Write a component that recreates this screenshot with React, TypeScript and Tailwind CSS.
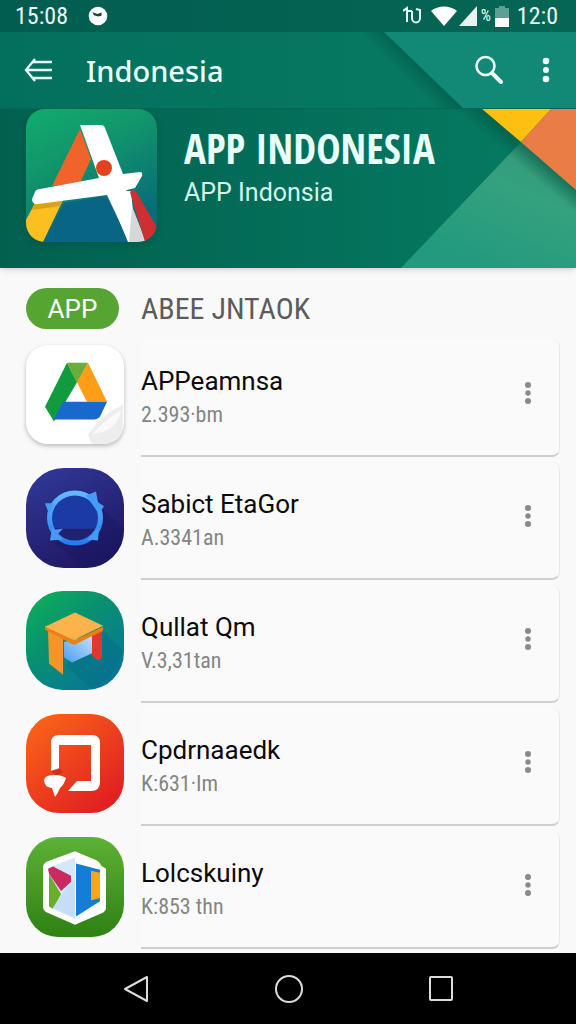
import type { ReactNode } from 'react';

type AppItem = {
  name: string;
  size: string;
  icon: ReactNode;
};

const apps: AppItem[] = [
  { name: 'APPeamnsa', size: '2.393·bm', icon: <DriveIcon /> },
  { name: 'Sabict EtaGor', size: 'A.3341an', icon: <RingIcon /> },
  { name: 'Qullat Qm', size: 'V.3,31tan', icon: <TableIcon /> },
  { name: 'Cpdrnaaedk', size: 'K:631·Im', icon: <FrameIcon /> },
  { name: 'Lolcskuiny', size: 'K:853 thn', icon: <CubeIcon /> },
];

export default function App() {
  return (
    <div className="flex min-h-screen flex-col bg-[#f9f9f9] font-['Roboto',sans-serif]">
      <header className="relative z-10 shadow-md">
        <StatusBar />
        <Toolbar />
        <Banner />
      </header>

      <main className="flex-1 pr-4 pl-[26px] pt-5">
        {/* Section heading */}
        <div className="mb-[10px] flex items-center gap-[22px]">
          <button
            type="button"
            className="h-[41px] w-[93px] rounded-full bg-[#56a532] text-[26px] leading-none text-white"
          >
            APP
          </button>
          <h2 className="font-['Roboto_Condensed','Roboto',sans-serif] text-[30px] leading-none text-[#5c5c5c]">
            ABEE JNTAOK
          </h2>
        </div>

        {/* App list */}
        <ul className="flex flex-col gap-[5px]">
          {apps.map((app) => (
            <li key={app.name} className="flex h-[118px] gap-[18px]">
              <div className="w-[97px] shrink-0 pt-[6px]">{app.icon}</div>
              <div className="flex flex-1 items-start justify-between rounded-r-lg border-r border-b-2 border-r-[#e8e8e8] border-b-[#cfcfd1] bg-[#fafafa] pr-4">
                <div className="pt-6">
                  <h3 className="text-[26px] leading-9 text-[#0b0b0b]">{app.name}</h3>
                  <p className="font-['Roboto_Condensed','Roboto',sans-serif] text-[22px] leading-8 text-[#858585]">
                    {app.size}
                  </p>
                </div>
                <button type="button" aria-label="More options" className="mt-8 p-2">
                  <svg viewBox="0 0 14 28" className="h-7 w-[14px]" fill="#8a8a8a">
                    <circle cx="7" cy="6" r="3" />
                    <circle cx="7" cy="14" r="2.7" />
                    <circle cx="7" cy="22" r="3" />
                  </svg>
                </button>
              </div>
            </li>
          ))}
        </ul>
      </main>

      <NavBar />
    </div>
  );
}

function StatusBar() {
  return (
    <div className="flex h-8 items-center bg-gradient-to-r from-[#015d50] to-[#066655] pr-[18px] pl-[15px] font-['Roboto_Condensed','Roboto',sans-serif] text-[24px] leading-none text-[#e9fbf6]">
      <span>15:08</span>
      <svg viewBox="0 0 20 20" className="ml-5 size-5">
        <circle cx="10" cy="10" r="9.3" fill="#fff" />
        <path d="M4.5 6l3 1.2 2 .8 4-1.5v3.2l-3.5.8-4-1.3z" fill="#16453d" />
      </svg>
      <div className="ml-auto flex items-center">
        <svg viewBox="0 0 20 20" className="size-5" fill="none" stroke="#e9fbf6" strokeWidth="2">
          <path d="M0 5l4-3v14M4 5h5M9 5v7c0 6 8 6 8 0V4l-4-1" />
        </svg>
        <svg viewBox="0 0 26 20" className="ml-2 h-5 w-[26px]" fill="#fff">
          <path d="M0 5C7-1 19-1 26 5L13 20z" />
        </svg>
        <svg viewBox="0 0 18 20" className="ml-[2px] h-5 w-[18px]">
          <path d="M18 0v20H0z" fill="#e5f4f0" />
        </svg>
        <span className="ml-1 text-[16px]">%</span>
        <svg viewBox="0 0 14 21" className="ml-1 h-[21px] w-[14px]">
          <path d="M4 0h6v2h4v11H0V2h4z" fill="#5d9f92" />
          <path d="M0 12h14v9H0z" fill="#fff" />
        </svg>
        <span className="ml-2">12:0</span>
      </div>
    </div>
  );
}

function Toolbar() {
  return (
    <div className="relative flex h-[76px] items-center bg-gradient-to-r from-[#03705d] to-[#087b63] pr-4 pl-6">
      <svg viewBox="0 0 220 76" className="absolute top-0 right-0 h-[76px] w-[220px]">
        <defs>
          <linearGradient id="fold" gradientUnits="userSpaceOnUse" x1="54" y1="51" x2="67" y2="38">
            <stop offset="0" stopColor="#025f4e" stopOpacity="0" />
            <stop offset="1" stopColor="#025f4e" stopOpacity="0.8" />
          </linearGradient>
        </defs>
        <path d="M2 0h26l79 76H81z" fill="url(#fold)" />
        <path d="M28 0h192v76H107z" fill="#128877" />
      </svg>
      <button type="button" aria-label="Back" className="relative">
        <svg viewBox="0 0 30 26" className="h-[26px] w-[30px]" fill="none" stroke="#e6fff8" strokeWidth="2.3">
          <path d="M11 2L2 13l9 11M9 5h19M2 13h26M9 21h19" />
        </svg>
      </button>
      <h1 className="relative ml-8 font-['Noto_Sans',sans-serif] text-[29px] leading-none font-medium text-[#e9fff9]">
        Indonesia
      </h1>
      <button type="button" aria-label="Search" className="relative ml-auto">
        <svg viewBox="0 0 30 30" className="size-[30px]" fill="none" stroke="#effffc">
          <circle cx="11.5" cy="11" r="9" strokeWidth="2.6" />
          <path d="M18 18l9 9" strokeWidth="4" strokeLinecap="round" />
        </svg>
      </button>
      <button type="button" aria-label="Menu" className="relative ml-7 px-2">
        <svg viewBox="0 0 12 28" className="h-7 w-3" fill="#effffc">
          <circle cx="6" cy="5" r="3.3" />
          <circle cx="6" cy="14" r="3" />
          <circle cx="6" cy="23" r="3.3" />
        </svg>
      </button>
    </div>
  );
}

function Banner() {
  return (
    <div className="relative flex h-40 items-start gap-[27px] overflow-hidden border-t border-[#056652] bg-gradient-to-r from-[#02604f] to-[#067c63] pl-[26px]">
      <svg viewBox="0 0 220 160" className="absolute -top-px right-0 h-40 w-[220px]">
        <defs>
          <linearGradient id="leaf" x1="1" y1="0.2" x2="0.5" y2="1">
            <stop offset="0" stopColor="#35997a" />
            <stop offset="0.35" stopColor="#35a17e" />
            <stop offset="1" stopColor="#239a7e" />
          </linearGradient>
          <linearGradient id="crease" gradientUnits="userSpaceOnUse" x1="153" y1="48" x2="165" y2="34">
            <stop offset="0" stopColor="#025341" stopOpacity="0" />
            <stop offset="1" stopColor="#025341" stopOpacity="0.6" />
          </linearGradient>
        </defs>
        <path d="M165 34l55 48v78H45z" fill="url(#leaf)" />
        <path d="M97 0h28l95 82v24z" fill="url(#crease)" />
        <path d="M125 0h71l-31 34z" fill="#fdbf11" />
        <path d="M196 0h24v82l-55-48z" fill="#e97d45" />
      </svg>
      <BannerLogo />
      <div className="relative pt-3">
        <p className="font-['Open_Sans_Condensed','Roboto_Condensed','Roboto',sans-serif] text-[41px] leading-[54px] font-bold text-[#e8fffa]">
          APP INDONESIA
        </p>
        <p className="text-[25px] leading-9 text-[#d5f5ec]">APP Indonsia</p>
      </div>
    </div>
  );
}

function BannerLogo() {
  return (
    <svg viewBox="0 0 131 134" className="relative h-[134px] w-[131px] shrink-0 drop-shadow-md">
      <defs>
        <linearGradient id="logo-bg" x1="0" y1="0" x2="0.5" y2="1">
          <stop offset="0" stopColor="#10ad6c" />
          <stop offset="0.4" stopColor="#11966b" />
          <stop offset="1" stopColor="#086c78" />
        </linearGradient>
        <clipPath id="logo-clip">
          <rect width="131" height="133" rx="19" />
        </clipPath>
      </defs>
      <g clipPath="url(#logo-clip)">
        <rect width="131" height="133" fill="url(#logo-bg)" />
        <path d="M38 94l42-7 25 46H17z" fill="#086583" />
        <path d="M54 20l11 30-11 24-28 3z" fill="#f0642c" />
        <path d="M9 94l28-3-20 42H-8V126z" fill="#fbbf20" />
        <path d="M9 94l28-3-3 6-28 4z" fill="#dca11a" />
        <path d="M54 16h21q3 0 4 3l18 46 17-2q3 0 2 4l-7 12-8 2q-3 2 0 7l5 45h-3L81 86 12 95q-6 1-6-5l3-7q1-3 5-3l59-11z" fill="#fff" />
        <path d="M81 82l24 0 5 51h-8z" fill="#fff" />
        <path d="M106 97l14 36h-17z" fill="#d6d7d7" />
        <path d="M104 83c3-3 5-2 7 1l26 45-17 7z" fill="#cf2e32" />
        <circle cx="78" cy="59" r="8" fill="#e2431e" />
      </g>
    </svg>
  );
}

function DriveIcon() {
  return (
    <svg viewBox="0 0 98 102" preserveAspectRatio="none" className="h-[100px] w-[98px] drop-shadow-[0_2px_2px_rgba(0,0,0,0.25)]">
      <rect width="98" height="101" rx="22" fill="#fff" />
      <path d="M41 18l10 20-23 40-9-15z" fill="#119b3e" />
      <path d="M41 18h21L51 39z" fill="#69ad3b" />
      <path d="M62 18l19 40H61L51 38z" fill="#fe9d17" />
      <path d="M37 58h44l-6 13q-2 5-7 5H28z" fill="#1868cf" />
      <path d="M97 61Q74 72 62 92l4 9h10q21 0 21-21z" fill="#ededed" />
      <path d="M95 66Q80 76 66 91l14-3q13-7 15-22z" fill="#fafafa" />
    </svg>
  );
}

function RingIcon() {
  return (
    <svg viewBox="0 0 98 102" preserveAspectRatio="none" className="h-[100px] w-[98px]">
      <defs>
        <linearGradient id="ring-bg" x1="0" y1="0" x2="0.5" y2="1">
          <stop offset="0" stopColor="#303a99" />
          <stop offset="1" stopColor="#201866" />
        </linearGradient>
        <linearGradient id="ring-line" x1="0" y1="0" x2="0" y2="1">
          <stop offset="0" stopColor="#62b9fb" />
          <stop offset="1" stopColor="#247df0" />
        </linearGradient>
        <clipPath id="ring-clip">
          <rect width="98" height="102" rx="38" />
        </clipPath>
      </defs>
      <g clipPath="url(#ring-clip)">
        <rect width="98" height="102" fill="url(#ring-bg)" />
        <path d="M75 40l25 24v40H64L26 75z" fill="#17165e" opacity="0.4" />
      </g>
      <circle cx="49" cy="51" r="25" fill="#20226f" />
      <path d="M29 37q20-22 40 0 7 12 4 25H36l-9-1q-5-14 2-24z" fill="#1c3aa4" />
      <circle cx="49" cy="51" r="25.5" fill="none" stroke="url(#ring-line)" strokeWidth="5" />
      <g fill="#459bf6">
        <path d="M19 36h9l-5 11z" />
        <path d="M60 28l10-4 2 11 6 4-5 8z" />
        <path d="M24 74l2-13 11 12z" />
        <path d="M72 74l1-13-12 12z" />
        <path d="M28 63l9-1-6 6z" />
      </g>
    </svg>
  );
}

function TableIcon() {
  return (
    <svg viewBox="0 0 98 98" preserveAspectRatio="none" className="h-[100px] w-[98px]">
      <defs>
        <linearGradient id="table-bg" x1="0" y1="0" x2="0.8" y2="1">
          <stop offset="0" stopColor="#0db257" />
          <stop offset="0.45" stopColor="#099070" />
          <stop offset="1" stopColor="#06759a" />
        </linearGradient>
        <linearGradient id="glass" x1="0" y1="1" x2="1" y2="0">
          <stop offset="0" stopColor="#4b9df5" />
          <stop offset="1" stopColor="#c4e2fa" />
        </linearGradient>
      </defs>
      <rect width="98" height="97" rx="37" fill="url(#table-bg)" />
      <path d="M76 38l20 19q-4 28-31 38L39 73z" fill="#066f88" opacity="0.55" />
      <path d="M38 50l28-7v18L46 70l-8-5z" fill="url(#glass)" />
      <path d="M22 38l15 8v36L23 71z" fill="#f49527" />
      <path d="M66 43l10-6v28q-1 4-6 2l-4-4z" fill="#e0392c" />
      <path d="M19 34l30 14 28-13v4L48 53 19 38z" fill="#e98118" />
      <path d="M49 21l28 13-29 14-29-13z" fill="#fdb34c" />
    </svg>
  );
}

function FrameIcon() {
  return (
    <svg viewBox="0 0 98 100" preserveAspectRatio="none" className="h-[100px] w-[98px]">
      <defs>
        <linearGradient id="frame-bg" x1="0" y1="0" x2="0.8" y2="1">
          <stop offset="0" stopColor="#fc6918" />
          <stop offset="1" stopColor="#e01d22" />
        </linearGradient>
      </defs>
      <rect width="98" height="99" rx="33" fill="url(#frame-bg)" />
      <path d="M25 57V29q0-8 8-8h33q8 0 8 8v39q0 9-9 9H42l9-10h14V31H33v24z" fill="#fff" />
      <path d="M25 57l8-3 4 4-6 4z" fill="#b8291a" opacity="0.6" />
      <path d="M18 66q1-5 10-5 8 0 12 3-2 7-6 10-2 5-5 9l-3-9q-8-1-8-8z" fill="#fff" />
    </svg>
  );
}

function CubeIcon() {
  return (
    <svg viewBox="0 0 98 98" preserveAspectRatio="none" className="h-[100px] w-[98px]">
      <defs>
        <linearGradient id="cube-bg" x1="0" y1="0" x2="0" y2="1">
          <stop offset="0" stopColor="#5db135" />
          <stop offset="1" stopColor="#2e8113" />
        </linearGradient>
      </defs>
      <rect width="98" height="98" rx="32" fill="url(#cube-bg)" />
      <path d="M49 14l22 9q3 2 4 5l5 3v38q0 4-5 6L49 86 21 74q-4-2-4-6V30q0-4 4-6z" fill="#fff" />
      <path d="M23 30l26-10v60L23 69z" fill="#d5e7f8" />
      <path d="M23 36l12 20-8 14-4-2z" fill="#68ad2b" />
      <path d="M22 31l5-2 18 9v6L35 53 23 36z" fill="#c92b61" />
      <path d="M45 44L27 69l22 10V42z" fill="#c6def5" />
      <path d="M50 26l24 6v31L50 78z" fill="#157cd8" />
      <path d="M65 33l9 2v25l-9 2z" fill="#fea41b" />
    </svg>
  );
}

function NavBar() {
  return (
    <nav className="flex h-[71px] items-center justify-center gap-[124px] bg-black">
      <button type="button" aria-label="Back">
        <svg viewBox="0 0 28 30" className="h-[30px] w-7" fill="none" stroke="#dcdcdc" strokeWidth="2">
          <path d="M25 3v24L3 15z" strokeLinejoin="round" />
        </svg>
      </button>
      <button type="button" aria-label="Home">
        <svg viewBox="0 0 30 30" className="size-[30px]" fill="none" stroke="#dcdcdc" strokeWidth="2">
          <circle cx="15" cy="15" r="13" />
        </svg>
      </button>
      <button type="button" aria-label="Recent apps">
        <svg viewBox="0 0 26 30" className="h-[30px] w-[26px]" fill="none" stroke="#dcdcdc" strokeWidth="2">
          <rect x="2" y="3" width="22" height="23" rx="1" />
        </svg>
      </button>
    </nav>
  );
}
